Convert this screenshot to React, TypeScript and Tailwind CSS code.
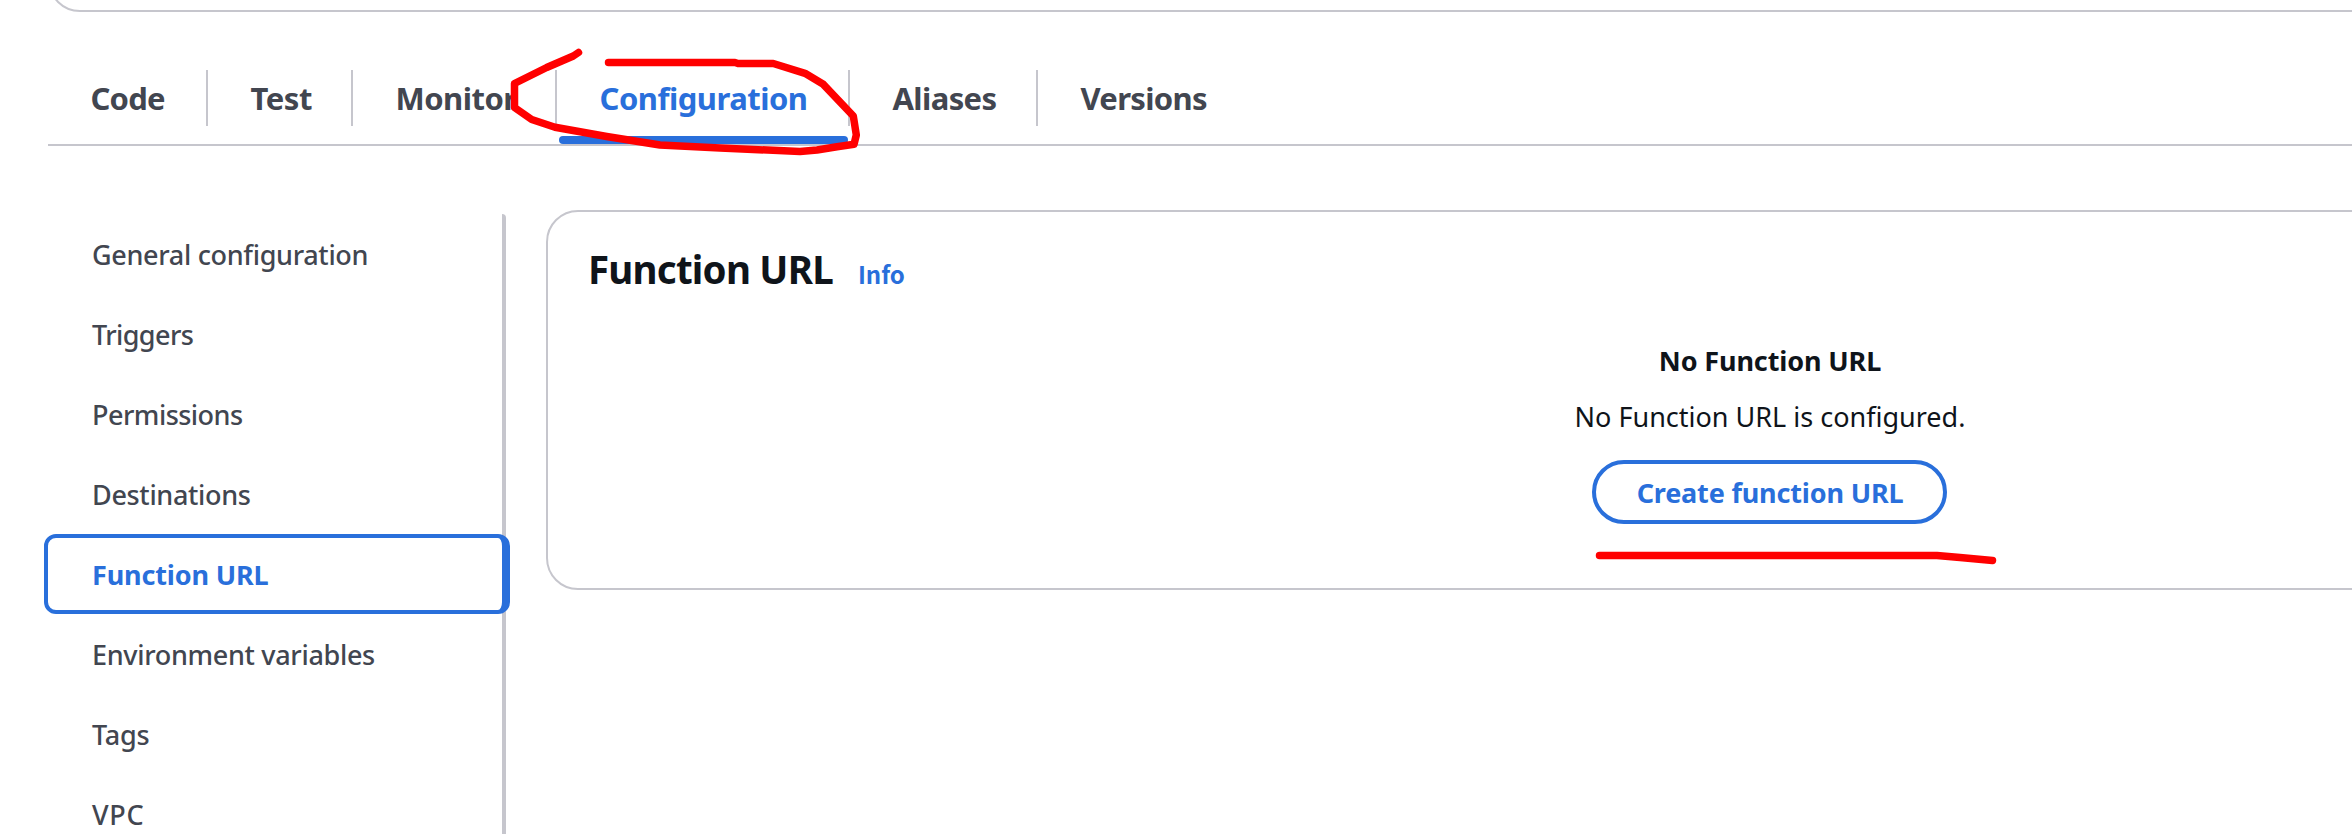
import { clsx } from "clsx";

type Label = { label: string; tracking: string };

const tabs: (Label & { width: string; active?: boolean })[] = [
  { label: "Code", tracking: "tracking-[-0.8px]", width: "w-[160px]" },
  { label: "Test", tracking: "tracking-[-0.46px]", width: "w-[145px]" },
  { label: "Monitor", tracking: "tracking-[-0.5px]", width: "w-[204px]" },
  { label: "Configuration", tracking: "tracking-[-0.5px]", width: "w-[293px]", active: true },
  { label: "Aliases", tracking: "tracking-[-0.6px]", width: "w-[188px]" },
  { label: "Versions", tracking: "tracking-[-0.68px]", width: "w-[210px]" },
];

const sections: (Label & { active?: boolean })[] = [
  { label: "General configuration", tracking: "tracking-[-0.32px]" },
  { label: "Triggers", tracking: "tracking-[-0.6px]" },
  { label: "Permissions", tracking: "tracking-[-0.52px]" },
  { label: "Destinations", tracking: "tracking-[-0.33px]" },
  { label: "Function URL", tracking: "tracking-[-0.15px]", active: true },
  { label: "Environment variables", tracking: "tracking-[-0.32px]" },
  { label: "Tags", tracking: "tracking-[-0.25px]" },
  { label: "VPC", tracking: "tracking-[0.7px]" },
];

function Tabs() {
  return (
    <div className="mt-[58px] ml-12 flex h-[76px] shrink-0 border-b-2 border-[#c6c6cd]">
      {tabs.map((tab, i) => (
        <button
          key={tab.label}
          className={clsx(
            "relative h-14 shrink-0 pl-[42.5px] text-left text-[31px] leading-[56px] font-bold",
            tab.width,
            tab.tracking,
            tab.active ? "text-[#296fdb]" : "text-[#424650]",
            i < tabs.length - 1 && "border-r-2 border-[#c6c6cd]",
          )}
        >
          {tab.label}
          {tab.active && (
            <span className="absolute top-[66px] left-[2px] h-2 w-[289px] rounded-full bg-[#296fdb]" />
          )}
        </button>
      ))}
    </div>
  );
}

function SideNav() {
  return (
    <nav className="mt-1 h-[660px] w-[458px] shrink-0 rounded-t-sm border-r-4 border-[#c6c6cd]">
      {sections.map((s) => (
        <a
          key={s.label}
          className={clsx(
            "relative block h-20 pl-11 text-[27px] leading-[82px] whitespace-nowrap",
            s.tracking,
            s.active ? "font-bold text-[#296fdb]" : "font-medium text-[#424650]",
          )}
        >
          {s.label}
          {s.active && (
            <span className="absolute top-0 -left-1 h-20 w-[466px] rounded-xl border-4 border-r-8 border-[#296fdb]" />
          )}
        </a>
      ))}
    </nav>
  );
}

function FunctionUrlCard() {
  return (
    <section className="ml-10 h-[380px] w-[2448px] shrink-0 rounded-[32px] border-2 border-[#c6c6cd]">
      <div className="flex items-baseline pt-8 pl-10">
        <h2 className="text-[38.5px] leading-[50px] font-bold tracking-[-0.78px] text-[#0f141a]">
          Function URL
        </h2>
        <a className="ml-[25px] font-['Noto_Sans_CJK_SC','Noto_Sans',sans-serif] text-[24px] leading-[30px] font-bold text-[#296fdb]">
          Info
        </a>
      </div>
      <div className="mt-[47px] flex flex-col items-center text-[27px] leading-[40px] text-[#0f141a]">
        <p className="font-bold tracking-[-0.12px]">No Function URL</p>
        <p className="mt-4">No Function URL is configured.</p>
        <button className="mt-[23px] mr-[2px] h-16 w-[355px] rounded-full border-4 border-[#296fdb] pt-px pl-[2px] font-bold tracking-[-0.17px] text-[#296fdb]">
          Create function URL
        </button>
      </div>
    </section>
  );
}

function PenMarks() {
  return (
    <svg
      className="pointer-events-none absolute inset-0"
      width="2352"
      height="834"
      viewBox="0 0 2352 834"
      fill="none"
      stroke="#ff0000"
      strokeWidth="7.5"
      strokeLinecap="round"
      strokeLinejoin="round"
    >
      <path d="M578.5 52.5L573.3 56L546.7 67.5L514.5 83.5V107.5L531.7 119.5L555 127.3L606.7 136.5L660 145L720 148L800 151.5L817 150L837 146.7L854 144.3L856.3 135L853.3 116L823.3 84.3L805 73.3L773.3 63.5H738L735 62.5H608.5" />
      <path d="M1599.5 555.5H1937L1960 557.5L1992.5 560.5" />
    </svg>
  );
}

export default function App() {
  return (
    <div className="relative flex h-[834px] w-[2352px] flex-col overflow-hidden bg-white font-['Noto_Sans',sans-serif]">
      <div className="-mt-[60px] ml-12 h-[72px] w-[2448px] shrink-0 rounded-b-[32px] border-2 border-[#c6c6cd]" />
      <Tabs />
      <div className="mt-16 ml-12 flex h-[664px] shrink-0 items-start">
        <SideNav />
        <FunctionUrlCard />
      </div>
      <PenMarks />
    </div>
  );
}
